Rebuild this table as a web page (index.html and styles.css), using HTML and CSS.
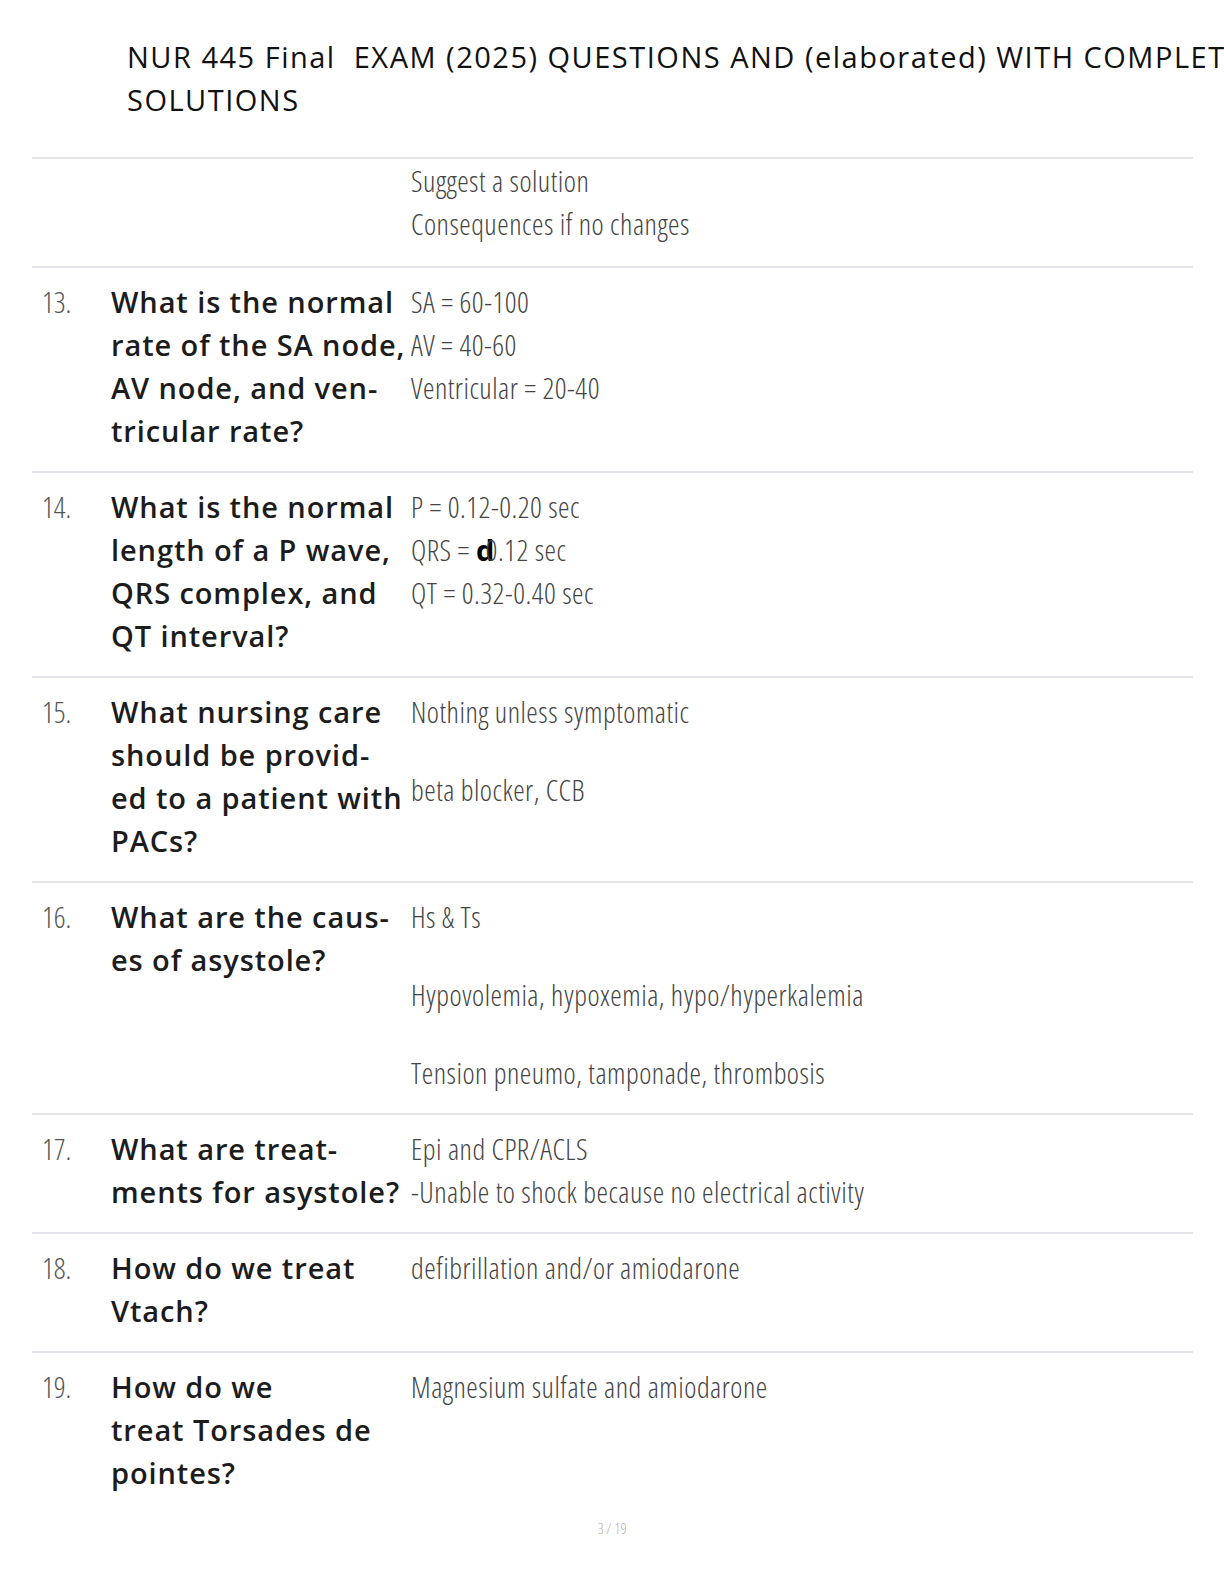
FILE: index.html
```html
<!DOCTYPE html>
<html lang="en">
<head>
<meta charset="utf-8">
<title>NUR 445 Final EXAM</title>
<link rel="stylesheet" href="styles.css">
</head>
<body>
<div class="page">
  <h1 class="title">NUR 445 Final  EXAM (2025) QUESTIONS AND (elaborated) WITH COMPLETE<br>SOLUTIONS</h1>

  <div class="table">
    <div class="row row-cont">
      <div class="num"></div>
      <div class="q"></div>
      <div class="a">
        <p>Suggest a solution<br>Consequences if no changes</p>
      </div>
    </div>

    <div class="row">
      <div class="num">13.</div>
      <div class="q">What is the normal<br>rate of the SA node,<br>AV node, and ven-<br>tricular rate?</div>
      <div class="a">
        <p>SA = 60-100<br>AV = 40-60<br>Ventricular = 20-40</p>
      </div>
    </div>

    <div class="row">
      <div class="num">14.</div>
      <div class="q">What is the normal<br>length of a P wave,<br>QRS complex, and<br>QT interval?</div>
      <div class="a">
        <p>P = 0.12-0.20 sec<br>QRS = <b class="glitch">d</b>0.12 sec<br>QT = 0.32-0.40 sec</p>
      </div>
    </div>

    <div class="row">
      <div class="num">15.</div>
      <div class="q">What nursing care<br>should be provid-<br>ed to a patient with<br>PACs?</div>
      <div class="a">
        <p>Nothing unless symptomatic</p>
        <p>beta blocker, CCB</p>
      </div>
    </div>

    <div class="row">
      <div class="num">16.</div>
      <div class="q">What are the caus-<br>es of asystole?</div>
      <div class="a">
        <p>Hs &amp; Ts</p>
        <p>Hypovolemia, hypoxemia, hypo/hyperkalemia</p>
        <p>Tension pneumo, tamponade, thrombosis</p>
      </div>
    </div>

    <div class="row">
      <div class="num">17.</div>
      <div class="q">What are treat-<br>ments for asystole?</div>
      <div class="a">
        <p>Epi and CPR/ACLS<br>-Unable to shock because no electrical activity</p>
      </div>
    </div>

    <div class="row">
      <div class="num">18.</div>
      <div class="q">How do we treat<br>Vtach?</div>
      <div class="a">
        <p>defibrillation and/or amiodarone</p>
      </div>
    </div>

    <div class="row row-last">
      <div class="num">19.</div>
      <div class="q">How do we<br>treat Torsades de<br>pointes?</div>
      <div class="a">
        <p>Magnesium sulfate and amiodarone</p>
      </div>
    </div>
  </div>

  <div class="footer">3 / 19</div>
</div>
</body>
</html>
```

FILE: styles.css
```css
html, body {
  margin: 0;
  padding: 0;
  background: #ffffff;
}

body {
  width: 1224px;
  height: 1584px;
  overflow: hidden;
  font-family: "Open Sans", "Noto Sans", sans-serif;
  color: #000;
}

.page {
  padding-top: 35px;
}

.title {
  margin: 0 0 35px 127px;
  font-size: 29px;
  font-weight: 400;
  letter-spacing: 1.5px;
  line-height: 43.4px;
  white-space: pre;
  color: #111;
}

.table {
  margin-left: 32px;
  width: 1161px;
}

.row {
  display: grid;
  grid-template-columns: 79px 300px 1fr;
  border-top: 2px solid #e3e3ea;
  padding: 12px 0 19px;
  font-size: 29px;
  line-height: 43px;
}

.row-cont {
  padding-top: 0;
  padding-bottom: 21px;
}

.row-last {
  padding-bottom: 10px;
}

.num {
  padding-left: 10px;
  font-weight: 300;
  font-stretch: 75%;
  color: #555;
}

.q {
  font-weight: 600;
  letter-spacing: 0.9px;
  color: #1c1c1c;
  white-space: nowrap;
}

.a {
  font-weight: 300;
  font-stretch: 75%;
  letter-spacing: 0.5px;
  color: #444;
  white-space: nowrap;
  display: flex;
  flex-direction: column;
  gap: 35px;
}

.a p {
  margin: 0;
}

.glitch {
  font-weight: 700;
  font-stretch: 100%;
  letter-spacing: 0;
  color: #000;
  margin-right: -0.3em;
}

.footer {
  text-align: center;
  font-size: 15px;
  font-weight: 300;
  font-stretch: 75%;
  color: #b0b0b0;
  margin-top: 14px;
}
```
